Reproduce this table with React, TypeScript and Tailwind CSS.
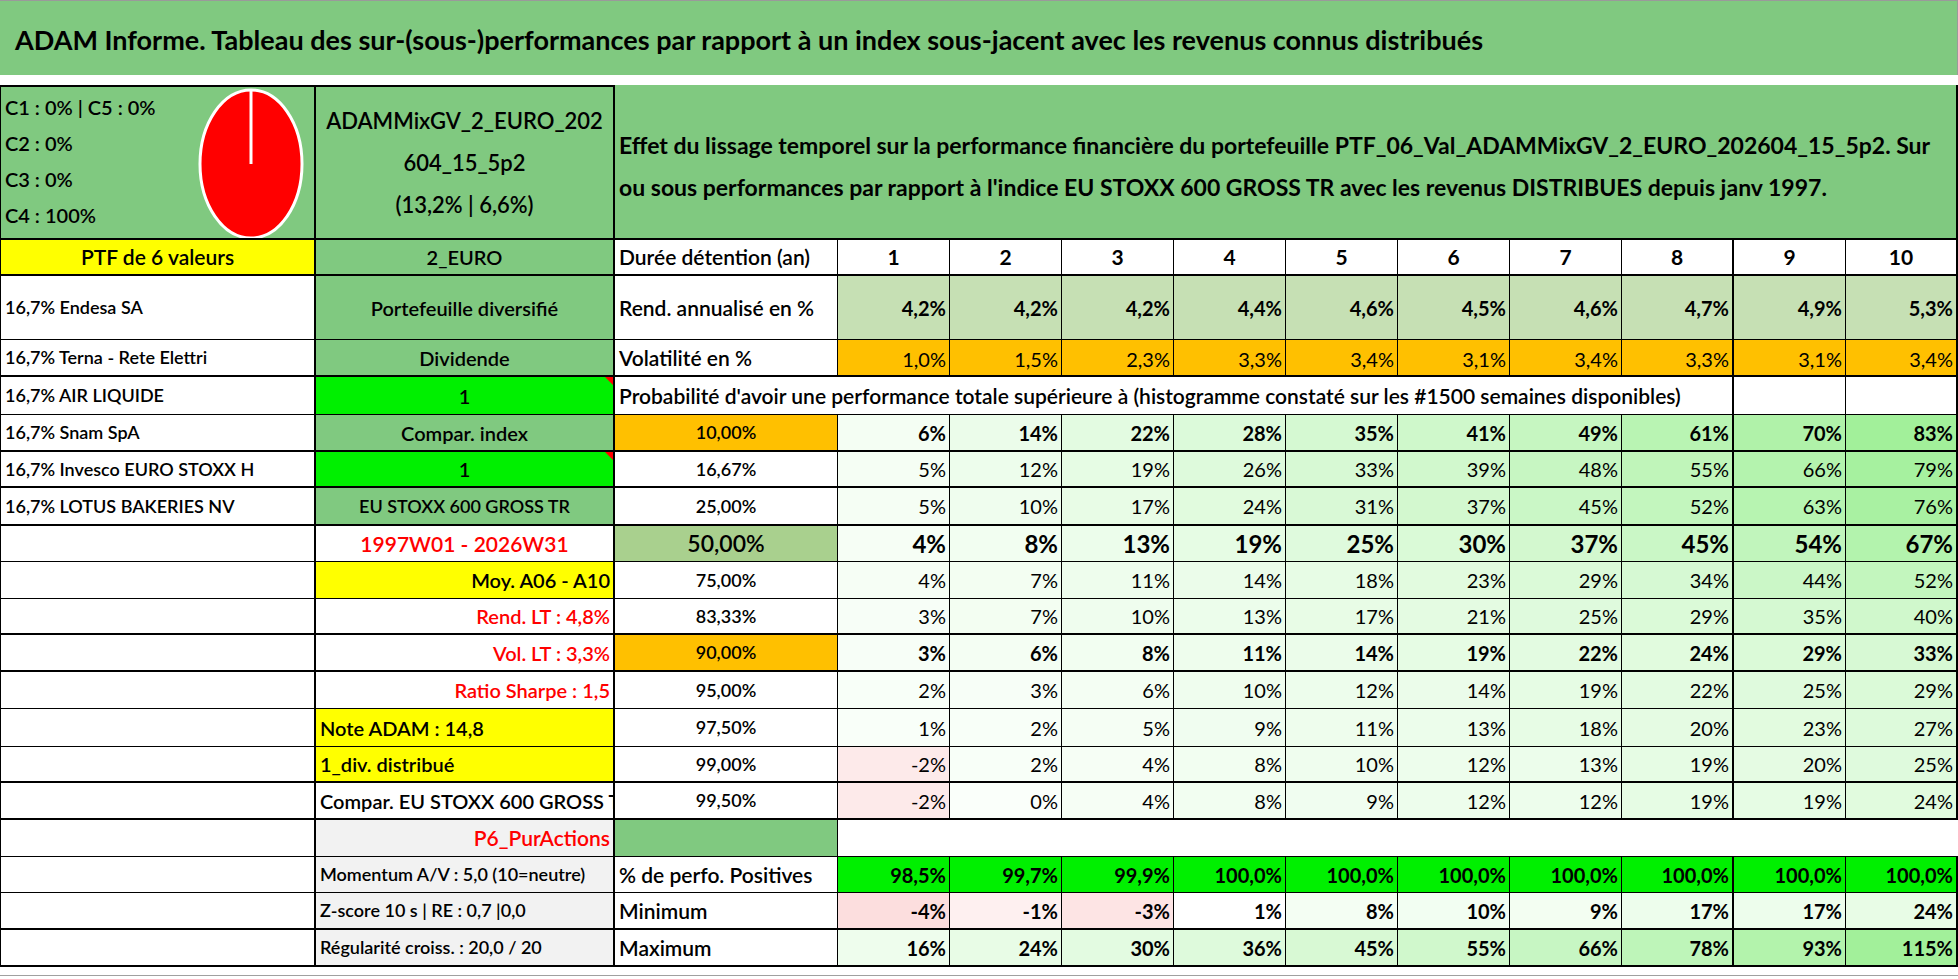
import type { ReactNode } from 'react';

const BR = ['', 'border-r border-black', 'border-r-2 border-black'];
const BB = ['', 'border-b border-black', 'border-b-2 border-black'];
// right border width of each column: A, B, C, then years 1..10
const COL_BR = [2, 2, 1, 1, 1, 1, 1, 1, 1, 1, 2, 1, 2];

const YEARS = ['1', '2', '3', '4', '5', '6', '7', '8', '9', '10'];
const REND = ['4,2%', '4,2%', '4,2%', '4,4%', '4,6%', '4,5%', '4,6%', '4,7%', '4,9%', '5,3%'];
const VOL = ['1,0%', '1,5%', '2,3%', '3,3%', '3,4%', '3,1%', '3,4%', '3,3%', '3,1%', '3,4%'];
const POSITIVES = ['98,5%', '99,7%', '99,9%', '100,0%', '100,0%', '100,0%', '100,0%', '100,0%', '100,0%', '100,0%'];
const MINIMUM = [-4, -1, -3, 1, 8, 10, 9, 17, 17, 24];
const MAXIMUM = [16, 24, 30, 36, 45, 55, 66, 78, 93, 115];

type Weight = 'bold' | 'light' | 'big';

type ProbRow = {
  h: string;
  bb: number;
  a?: string;
  b?: ReactNode;
  bClass: string;
  threshold: string;
  tClass: string;
  weight: Weight;
  values: number[];
};

function tint(v: number, max: number) {
  if (v < 0) {
    const t = Math.min(1, -v / 4);
    return `rgb(${Math.round(254 - t * 2)}, ${Math.round(246 - t * 24)}, ${Math.round(246 - t * 24)})`;
  }
  const t = Math.min(1, v / max);
  return `rgb(${Math.round(250 - t * 88)}, ${Math.round(255 - t * 15)}, ${Math.round(250 - t * 96)})`;
}

function Cell({
  col,
  span = 1,
  bb,
  className = '',
  style,
  children,
}: {
  col: number;
  span?: number;
  bb: number;
  className?: string;
  style?: React.CSSProperties;
  children?: ReactNode;
}) {
  const spanClass =
    span === 11 ? 'col-span-11' : span === 10 ? 'col-span-10' : span === 9 ? 'col-span-9' : '';
  return (
    <div
      style={style}
      className={`relative flex min-w-0 items-center overflow-hidden whitespace-nowrap ${spanClass} ${BR[COL_BR[col + span - 1]]} ${BB[bb]} ${className}`}
    >
      {children}
    </div>
  );
}

function Flag() {
  return (
    <span className="absolute right-0 top-0 h-0 w-0 border-l-[8px] border-t-[8px] border-l-transparent border-t-[#ff0000]" />
  );
}

const GRID = 'grid grid-cols-[315px_299px_223px_repeat(10,112px)]';

const PROB_ROWS: ProbRow[] = [
  { h: 'h-[37px]', bb: 2, a: '16,7% Snam SpA', b: 'Compar. index', bClass: 'justify-center bg-[#80c980]', threshold: '10,00%', tClass: 'bg-[#ffc000]', weight: 'bold', values: [6, 14, 22, 28, 35, 41, 49, 61, 70, 83] },
  { h: 'h-[36px]', bb: 2, a: '16,7% Invesco EURO STOXX H', b: <><Flag />1</>, bClass: 'justify-center bg-[#00f000]', threshold: '16,67%', tClass: '', weight: 'light', values: [5, 12, 19, 26, 33, 39, 48, 55, 66, 79] },
  { h: 'h-[38px]', bb: 2, a: '16,7% LOTUS BAKERIES NV', b: <span className="text-[18px]">EU STOXX 600 GROSS TR</span>, bClass: 'justify-center bg-[#80c980]', threshold: '25,00%', tClass: '', weight: 'light', values: [5, 10, 17, 24, 31, 37, 45, 52, 63, 76] },
  { h: 'h-[36px]', bb: 1, b: <span className="text-[21px]">1997W01 - 2026W31</span>, bClass: 'justify-center text-[#ff0000]', threshold: '50,00%', tClass: 'bg-[#a9d08e] text-[23px]', weight: 'big', values: [4, 8, 13, 19, 25, 30, 37, 45, 54, 67] },
  { h: 'h-[37px]', bb: 1, b: 'Moy. A06 - A10', bClass: 'justify-end pr-[3px] bg-[#ffff00]', threshold: '75,00%', tClass: '', weight: 'light', values: [4, 7, 11, 14, 18, 23, 29, 34, 44, 52] },
  { h: 'h-[36px]', bb: 2, b: 'Rend. LT : 4,8%', bClass: 'justify-end pr-[3px] text-[#ff0000]', threshold: '83,33%', tClass: '', weight: 'light', values: [3, 7, 10, 13, 17, 21, 25, 29, 35, 40] },
  { h: 'h-[37px]', bb: 2, b: 'Vol. LT : 3,3%', bClass: 'justify-end pr-[3px] text-[#ff0000]', threshold: '90,00%', tClass: 'bg-[#ffc000]', weight: 'bold', values: [3, 6, 8, 11, 14, 19, 22, 24, 29, 33] },
  { h: 'h-[37px]', bb: 1, b: 'Ratio Sharpe : 1,5', bClass: 'justify-end pr-[3px] text-[#ff0000]', threshold: '95,00%', tClass: '', weight: 'light', values: [2, 3, 6, 10, 12, 14, 19, 22, 25, 29] },
  { h: 'h-[38px]', bb: 1, b: 'Note ADAM : 14,8', bClass: 'pl-[4px] bg-[#ffff00]', threshold: '97,50%', tClass: '', weight: 'light', values: [1, 2, 5, 9, 11, 13, 18, 20, 23, 27] },
  { h: 'h-[36px]', bb: 2, b: '1_div. distribué', bClass: 'pl-[4px] bg-[#ffff00]', threshold: '99,00%', tClass: '', weight: 'light', values: [-2, 2, 4, 8, 10, 12, 13, 19, 20, 25] },
  { h: 'h-[37px]', bb: 2, b: 'Compar. EU STOXX 600 GROSS TR', bClass: 'pl-[4px]', threshold: '99,50%', tClass: '', weight: 'light', values: [-2, 0, 4, 8, 9, 12, 12, 19, 19, 24] },
];

const VALUE_CLASS: Record<Weight, string> = {
  bold: 'text-[20px] font-bold',
  light: 'text-[20px] font-normal',
  big: 'text-[24px] font-bold',
};

export default function App() {
  return (
    <div className="h-[979px] w-[1958px] overflow-hidden bg-white font-[Lato,sans-serif] text-black">
      <div className="flex h-[75px] items-center border-r border-t border-[#9a9a9a] bg-[#80c980] pl-[15px] pt-[4px] text-[27px] font-bold whitespace-nowrap">
        ADAM Informe. Tableau des sur-(sous-)performances par rapport à un index sous-jacent avec les revenus connus distribués
      </div>
      <div className="h-[10px]" />

      <div className="w-[1957px] border-l border-black">
        {/* header block */}
        <div className={`${GRID} h-[155px]`}>
          <Cell col={0} bb={2} className="items-start border-t-2 bg-[#80c980]">
            <div className="flex flex-col pl-[4px] pt-[2px] text-[20px] font-semibold leading-[36px]">
              <span>C1 : 0% | C5 : 0%</span>
              <span>C2 : 0%</span>
              <span>C3 : 0%</span>
              <span>C4 : 100%</span>
            </div>
            <svg className="absolute left-[197px] top-[1px]" width="106" height="152" viewBox="0 0 106 152">
              <ellipse cx="53" cy="76" rx="51" ry="74" fill="#ff0000" stroke="#ffffff" strokeWidth="3" />
              <line x1="53" y1="2" x2="53" y2="76" stroke="#ffffff" strokeWidth="3" />
            </svg>
          </Cell>
          <Cell col={1} bb={2} className="flex-col justify-center border-t-2 bg-[#80c980] text-[22px] font-semibold leading-[42px]">
            <span>ADAMMixGV_2_EURO_202</span>
            <span>604_15_5p2</span>
            <span>(13,2% | 6,6%)</span>
          </Cell>
          <Cell col={2} span={11} bb={2} className="bg-[#80c980] pl-[4px] pt-[8px] text-[23px] font-bold leading-[42px]">
            <div>
              Effet du lissage temporel sur la performance financière du portefeuille PTF_06_Val_ADAMMixGV_2_EURO_202604_15_5p2. Sur
              <br />
              ou sous performances par rapport à l'indice EU STOXX 600 GROSS TR avec les revenus DISTRIBUES depuis janv 1997.
            </div>
          </Cell>
        </div>

        {/* holding period */}
        <div className={`${GRID} h-[36px] text-[21px] font-semibold`}>
          <Cell col={0} bb={2} className="justify-center bg-[#ffff00]">PTF de 6 valeurs</Cell>
          <Cell col={1} bb={2} className="justify-center bg-[#80c980] text-[20px]">2_EURO</Cell>
          <Cell col={2} bb={2} className="pl-[4px]">Durée détention (an)</Cell>
          {YEARS.map((y, i) => (
            <Cell key={y} col={3 + i} bb={2} className="justify-center font-bold">{y}</Cell>
          ))}
        </div>

        <div className={`${GRID} h-[64px] text-[21px] font-semibold`}>
          <Cell col={0} bb={1} className="pl-[4px] text-[18px]">16,7% Endesa SA</Cell>
          <Cell col={1} bb={1} className="justify-center bg-[#80c980] text-[20px]">Portefeuille diversifié</Cell>
          <Cell col={2} bb={1} className="pl-[4px]">Rend. annualisé en %</Cell>
          {REND.map((v, i) => (
            <Cell key={i} col={3 + i} bb={1} className="justify-end bg-[#c6e0b4] pr-[3px] text-[20px] font-bold">{v}</Cell>
          ))}
        </div>

        <div className={`${GRID} h-[37px] text-[21px] font-semibold`}>
          <Cell col={0} bb={2} className="pl-[4px] text-[18px]">16,7% Terna - Rete Elettri</Cell>
          <Cell col={1} bb={2} className="justify-center bg-[#80c980] text-[20px]">Dividende</Cell>
          <Cell col={2} bb={2} className="pl-[4px]">Volatilité en %</Cell>
          {VOL.map((v, i) => (
            <Cell key={i} col={3 + i} bb={2} className="items-end justify-end bg-[#ffc000] pb-[1px] pr-[3px] text-[20px] font-normal">{v}</Cell>
          ))}
        </div>

        <div className={`${GRID} h-[38px] text-[21px] font-semibold`}>
          <Cell col={0} bb={1} className="pl-[4px] text-[18px]">16,7% AIR LIQUIDE</Cell>
          <Cell col={1} bb={1} className="justify-center bg-[#00f000] text-[20px]">
            <Flag />1
          </Cell>
          <Cell col={2} span={9} bb={1} className="pl-[4px]">
            Probabilité d'avoir une performance totale supérieure à (histogramme constaté sur les #1500 semaines disponibles)
          </Cell>
          <Cell col={11} bb={1} />
          <Cell col={12} bb={1} />
        </div>

        {PROB_ROWS.map((row, r) => (
          <div key={r} className={`${GRID} ${row.h} text-[20px] font-semibold`}>
            <Cell col={0} bb={row.bb} className="pl-[4px] text-[18px]">{row.a}</Cell>
            <Cell col={1} bb={row.bb} className={row.bClass}>{row.b}</Cell>
            <Cell col={2} bb={row.bb} className={`justify-center text-[18px] ${row.tClass}`}>{row.threshold}</Cell>
            {row.values.map((v, i) => (
              <Cell
                key={i}
                col={3 + i}
                bb={row.bb}
                style={{ backgroundColor: tint(v, 83) }}
                className={`justify-end pr-[3px] ${VALUE_CLASS[row.weight]}`}
              >
                {v}%
              </Cell>
            ))}
          </div>
        ))}

        <div className={`${GRID} h-[37px] text-[21px] font-semibold`}>
          <Cell col={0} bb={1} />
          <Cell col={1} bb={1} className="justify-end bg-[#f2f2f2] pr-[3px] text-[#ff0000]">P6_PurActions</Cell>
          <Cell col={2} bb={1} className="bg-[#80c980]" />
          <div className="col-span-10 border-b border-black" />
        </div>

        <div className={`${GRID} h-[36px] text-[21px] font-semibold`}>
          <Cell col={0} bb={1} />
          <Cell col={1} bb={1} className="bg-[#f2f2f2] pl-[4px] text-[18px]">Momentum A/V : 5,0 (10=neutre)</Cell>
          <Cell col={2} bb={1} className="pl-[4px]">% de perfo. Positives</Cell>
          {POSITIVES.map((v, i) => (
            <Cell key={i} col={3 + i} bb={1} className="justify-end bg-[#00f000] pr-[3px] text-[20px] font-bold">{v}</Cell>
          ))}
        </div>

        <div className={`${GRID} h-[37px] text-[21px] font-semibold`}>
          <Cell col={0} bb={2} />
          <Cell col={1} bb={2} className="bg-[#f2f2f2] pl-[4px] text-[18px]">Z-score 10 s | RE : 0,7 |0,0</Cell>
          <Cell col={2} bb={2} className="pl-[4px]">Minimum</Cell>
          {MINIMUM.map((v, i) => (
            <Cell key={i} col={3 + i} bb={2} style={{ backgroundColor: v < 2 && v > 0 ? '#ffffff' : tint(v, 115) }} className="justify-end pr-[3px] text-[20px] font-bold">{v}%</Cell>
          ))}
        </div>

        <div className={`${GRID} h-[37px] text-[21px] font-semibold`}>
          <Cell col={0} bb={2} />
          <Cell col={1} bb={2} className="bg-[#f2f2f2] pl-[4px] text-[18px]">Régularité croiss. : 20,0 / 20</Cell>
          <Cell col={2} bb={2} className="pl-[4px]">Maximum</Cell>
          {MAXIMUM.map((v, i) => (
            <Cell key={i} col={3 + i} bb={2} style={{ backgroundColor: tint(v, 115) }} className="justify-end pr-[3px] text-[20px] font-bold">{v}%</Cell>
          ))}
        </div>
      </div>
      <div className="mt-[8px] h-px w-full bg-[#a0a0a0]" />
    </div>
  );
}
